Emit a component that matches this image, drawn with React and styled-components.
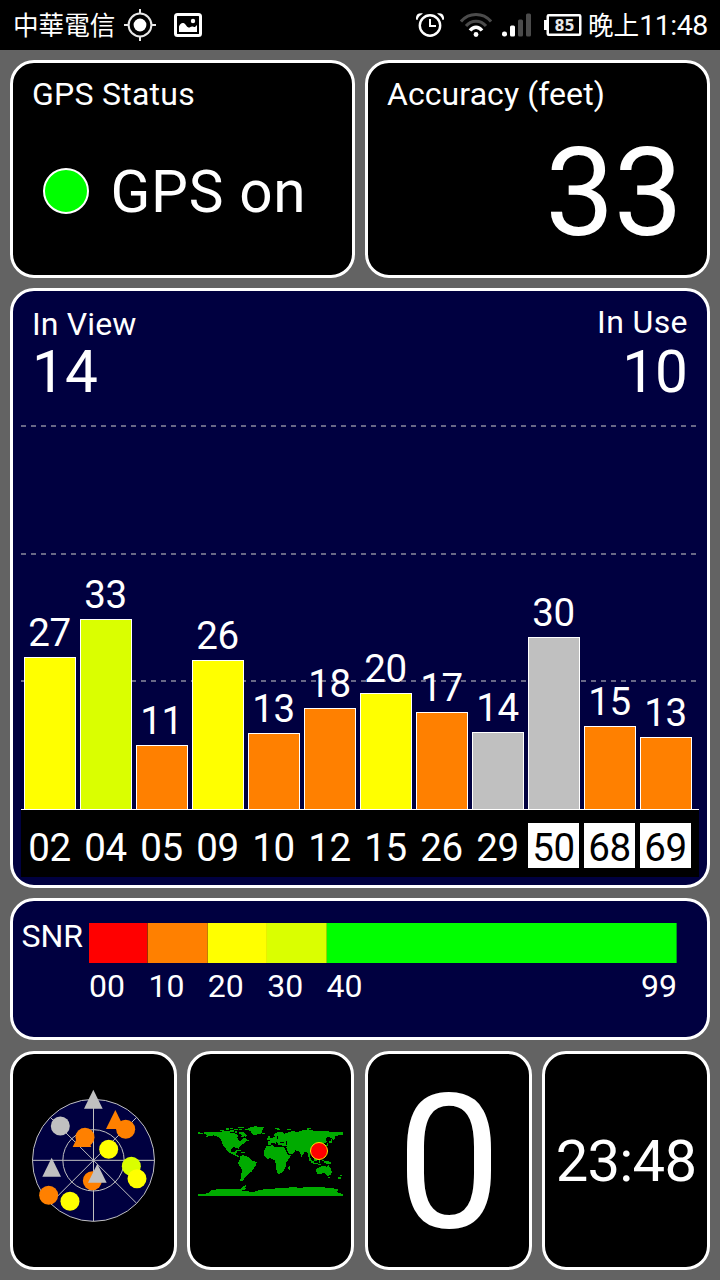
import React from "react";
import styled, { createGlobalStyle } from "styled-components";

const GlobalStyle = createGlobalStyle`
  * { box-sizing: border-box; }
  body {
    margin: 0;
    background: #636363;
    color: #fff;
    font-family: Roboto, "Noto Sans CJK TC", sans-serif;
  }
`;

const Screen = styled.div`
  width: 720px;
  height: 1280px;
  display: flex;
  flex-direction: column;
  background: #636363;
  overflow: hidden;
`;

const StatusBar = styled.header`
  height: 50px;
  flex: none;
  display: flex;
  justify-content: space-between;
  padding: 0 12px 0 13px;
  background: #000;
`;

const StatusGroup = styled.div`
  display: flex;
  align-items: center;
  height: 50px;
`;

const Carrier = styled.span`
  width: 111px;
  height: 50px;
  font-family: "Noto Sans CJK TC", sans-serif;
  font-size: 25.6px;
  line-height: 48px;
  white-space: nowrap;
`;

const Clock = styled.span`
  display: flex;
  align-items: baseline;
  width: 120px;
  margin-left: 6px;
  font-size: 28.5px;
  line-height: 50px;
  white-space: nowrap;
  letter-spacing: -0.5px;
`;

const ClockPeriod = styled.span`
  font-family: "Noto Sans CJK TC", sans-serif;
  font-size: 25.6px;
  line-height: 50px;
  letter-spacing: 0;
`;

const Icon = styled.svg`
  flex: none;
  display: block;
  margin-left: ${(p) => p.$gap || 0}px;
`;

const Dashboard = styled.main`
  display: flex;
  flex-direction: column;
  gap: 10px;
  padding: 10px;
`;

const CardRow = styled.div`
  display: flex;
  justify-content: space-between;
  margin-top: ${(p) => p.$offset || 0}px;
`;

const Card = styled.section`
  display: flex;
  flex-direction: column;
  flex: none;
  width: ${(p) => p.$width}px;
  height: ${(p) => p.$height}px;
  border: 3px solid #fff;
  border-radius: 24px;
  background: ${(p) => (p.$navy ? "#000040" : "#000")};
`;

const CardTitle = styled.h2`
  margin: 0;
  padding: 15px 0 0 19px;
  font-size: 32px;
  font-weight: 400;
  line-height: 32px;
  white-space: nowrap;
  letter-spacing: ${(p) => p.$tracking || 0}px;
`;

const FixStatus = styled.div`
  display: flex;
  align-items: center;
  gap: 21.5px;
  padding: 52px 0 0 30px;
  font-size: 58.5px;
  line-height: 60px;
  letter-spacing: 0.7px;
  white-space: nowrap;
`;

const FixDot = styled.span`
  width: 46px;
  height: 46px;
  margin-bottom: 2px;
  border: 2px solid #fff;
  border-radius: 50%;
  background: #0f0;
`;

const AccuracyValue = styled.div`
  padding: 22px 25px 0 0;
  font-size: 123px;
  line-height: 123px;
  letter-spacing: -0.8px;
  text-align: right;
`;

const Summary = styled.div`
  display: flex;
  justify-content: space-between;
  padding: 15px 19px 0;
`;

const Tally = styled.div`
  display: flex;
  flex-direction: column;
  text-align: ${(p) => (p.$end ? "right" : "left")};
`;

const TallyLabel = styled.span`
  padding-top: ${(p) => p.$drop || 0}px;
  height: 35px;
  font-size: 32px;
  line-height: 32px;
  letter-spacing: ${(p) => p.$tracking || 0}px;
`;

const TallyValue = styled.span`
  font-size: 58.5px;
  line-height: 62px;
  height: 60px;
`;

const Plot = styled.div`
  position: relative;
  display: flex;
  align-items: flex-end;
  gap: 4px;
  width: 678px;
  height: 408px;
  margin: 1px 0 0 8px;
  padding: 0 7px 0 3px;
  border-bottom: 1px solid #fff;
`;

const GridLine = styled.div`
  position: absolute;
  left: 0;
  top: ${(p) => p.$top}px;
  width: 675px;
  height: 2px;
  background: repeating-linear-gradient(90deg, #686886 0 5px, transparent 5px 10px);
`;

const Column = styled.div`
  position: relative;
  width: 52px;
  display: flex;
  flex-direction: column;
  align-items: center;
`;

const BarValue = styled.span`
  margin-bottom: 5px;
  font-size: 38.5px;
  line-height: 38.5px;
  margin-left: -1px;
  letter-spacing: -0.4px;
`;

const Bar = styled.div`
  width: 52px;
  border: 1px solid #fff;
  border-bottom: 0;
  background: ${(p) => p.$color};
`;

const SatelliteIds = styled.div`
  display: flex;
  align-items: flex-start;
  gap: 5px;
  width: 678px;
  height: 67px;
  margin-left: 8px;
  padding: 13px 0 0 3px;
  background: #000;
`;

const SatelliteId = styled.span`
  width: 51px;
  height: 45px;
  font-size: 38.5px;
  line-height: 50px;
  letter-spacing: -0.4px;
  text-align: center;
  color: ${(p) => (p.$inverse ? "#000" : "#fff")};
  background: ${(p) => (p.$inverse ? "#fff" : "transparent")};
`;

const Legend = styled.div`
  display: flex;
  padding: 19px 0 0 8px;
`;

const LegendTitle = styled.span`
  width: 68px;
  padding-left: 0.5px;
  font-size: 32px;
  line-height: 32px;
`;

const Scale = styled.div`
  width: 588px;
`;

const ScaleBar = styled.div`
  display: flex;
  height: 40px;
  margin-top: 3px;
`;

const ScaleSegment = styled.div`
  flex: ${(p) => (p.$last ? "1" : "none")};
  width: 59.4px;
  background: ${(p) => p.$color};
  border-right: 1px solid ${(p) => p.$edge};
`;

const ScaleLabels = styled.div`
  display: flex;
  padding-top: 7px;
  font-size: 32px;
  line-height: 32px;
`;

const ScaleLabel = styled.span`
  width: 59.4px;
  flex: ${(p) => (p.$last ? "1" : "none")};
  text-align: ${(p) => (p.$last ? "right" : "left")};
`;

const TileBody = styled.div`
  flex: 1;
  display: flex;
  justify-content: center;
  padding-top: ${(p) => p.$top}px;
`;

const SpeedValue = styled.div`
  padding-left: 2px;
  font-size: 187px;
  line-height: 188px;
`;

const TimeValue = styled.div`
  font-size: 58px;
  line-height: 58px;
  letter-spacing: -0.8px;
`;

const YELLOW = "#ff0";
const LIME = "#daff00";
const ORANGE = "#ff8000";
const GREY = "#c0c0c0";
const MAP_GREEN = "#00ab00";

const satellites = [
  { id: "02", snr: 27, height: 152, color: YELLOW },
  { id: "04", snr: 33, height: 190, color: LIME },
  { id: "05", snr: 11, height: 64, color: ORANGE },
  { id: "09", snr: 26, height: 149, color: YELLOW },
  { id: "10", snr: 13, height: 76, color: ORANGE },
  { id: "12", snr: 18, height: 101, color: ORANGE },
  { id: "15", snr: 20, height: 116, color: YELLOW },
  { id: "26", snr: 17, height: 97, color: ORANGE },
  { id: "29", snr: 14, height: 77, color: GREY },
  { id: "50", snr: 30, height: 172, color: GREY, inverse: true },
  { id: "68", snr: 15, height: 83, color: ORANGE, inverse: true },
  { id: "69", snr: 13, height: 72, color: ORANGE, inverse: true },
];

const scale = [
  { label: "00", color: "#f00", edge: "#a03000" },
  { label: "10", color: ORANGE, edge: "#c08000" },
  { label: "20", color: YELLOW, edge: "#e8f000" },
  { label: "30", color: LIME, edge: "#90d800" },
  { label: "40", color: "#0f0", edge: "#00a018" },
];

function LocateIcon() {
  return (
    <Icon width="32" height="32" viewBox="0 0 32 32">
      <g fill="none" stroke="#e8e8e8" strokeWidth="2">
        <circle cx="16" cy="16" r="11.4" />
        <path d="M16 0v5M16 27v5M0 16h5M27 16h5" />
      </g>
      <circle cx="16" cy="16" r="6.4" fill="#fff" />
    </Icon>
  );
}

function PictureIcon() {
  return (
    <Icon width="28" height="24" viewBox="0 0 28 24" $gap={18}>
      <rect x="1.5" y="1.5" width="25" height="21" rx="2" fill="none" stroke="#fff" strokeWidth="3" />
      <path d="M5 19v-5.500C6 11 7.500 9.500 9.500 10c2 .5 3 4 5 4.500 1.500.3 2-1 3.500-1s2 .8 3 .5l2-2V19z" fill="#fff" />
      <circle cx="19" cy="8" r="2.200" fill="#fff" />
    </Icon>
  );
}

function AlarmIcon() {
  return (
    <Icon width="28" height="24" viewBox="0 0 28 24">
      <circle cx="14" cy="12.500" r="10.200" fill="none" stroke="#fff" strokeWidth="2.400" />
      <path d="M14 6v7h6" fill="none" stroke="#fff" strokeWidth="2" />
      <path d="M0 6.500C-.5 2 2-.5 7 .5L5 2C3 3 2 5 1.500 7zM28 6.500C28.500 2 26-.5 21 .5l2 1.500c2 1 3 3 3.500 5z" fill="#fff" />
    </Icon>
  );
}

function WifiIcon() {
  return (
    <Icon width="32" height="24" viewBox="0 0 32 24" $gap={16}>
      <g fill="none" strokeWidth="3">
        <path d="M1 8.500C9-.8 23-.8 31 8.500" stroke="#4b4b4b" />
        <path d="M6 13C11.500 6.500 20.500 6.500 26 13" stroke="#4b4b4b" />
        <path d="M10 17.500c3.500-4.300 8.500-4.300 12 0" stroke="#fff" strokeWidth="3.500" />
      </g>
      <circle cx="16" cy="21.500" r="2.400" fill="#fff" />
    </Icon>
  );
}

function SignalIcon() {
  return (
    <Icon width="30" height="24" viewBox="0 0 30 24" $gap={10}>
      <rect x="0" y="18.500" width="5" height="5" rx="2.200" fill="#fff" />
      <rect x="8" y="12.500" width="5" height="11" rx="1.500" fill="#fff" />
      <rect x="16" y="6.500" width="5" height="17" rx="1.500" fill="#4b4b4b" />
      <rect x="24" y="0.500" width="5" height="23" rx="1.500" fill="#4b4b4b" />
    </Icon>
  );
}

function BatteryIcon() {
  return (
    <Icon width="38" height="22" viewBox="0 0 38 22" $gap={12}>
      <rect x="0" y="6" width="3" height="10" fill="#fff" />
      <rect x="3.750" y="1.250" width="32.500" height="19.500" rx="1" fill="none" stroke="#fff" strokeWidth="2.500" />
      <text
        x="20.500"
        y="16.500"
        fill="#e8e8e8"
        fontFamily="'DejaVu Sans', sans-serif"
        fontSize="15"
        fontWeight="700"
        textAnchor="middle"
        textLength="20"
        lengthAdjust="spacingAndGlyphs"
      >
        85
      </text>
    </Icon>
  );
}

const skyMarks = [
  { shape: "circle", x: 181, y: 258, color: GREY },
  { shape: "triangle", x: 280, y: 178, color: GREY },
  { shape: "triangle", x: 346, y: 239, color: ORANGE },
  { shape: "circle", x: 377, y: 268, color: ORANGE },
  { shape: "triangle", x: 246, y: 293, color: ORANGE },
  { shape: "circle", x: 255, y: 292, color: ORANGE },
  { shape: "circle", x: 326, y: 328, color: YELLOW },
  { shape: "circle", x: 394, y: 379, color: LIME },
  { shape: "circle", x: 411, y: 416, color: YELLOW },
  { shape: "triangle", x: 155, y: 382, color: GREY },
  { shape: "circle", x: 277, y: 422, color: ORANGE },
  { shape: "triangle", x: 292, y: 400, color: GREY },
  { shape: "circle", x: 146, y: 466, color: ORANGE },
  { shape: "circle", x: 210, y: 484, color: YELLOW },
];

function SkyView() {
  return (
    <svg width="123" height="133" viewBox="96 147 369 399">
      <circle cx="280.500" cy="361" r="183" fill="#000040" stroke="#c0c0c0" strokeWidth="3" />
      <g fill="none" stroke="#c0c0c0" strokeWidth="3">
        <circle cx="280.500" cy="361" r="92" />
        <path d="M97 361H464M280.500 178V544M151 232L410 490M410 232L151 490" />
      </g>
      {skyMarks.map((m, i) =>
        m.shape === "circle" ? (
          <circle key={i} cx={m.x} cy={m.y} r="28.500" fill={m.color} />
        ) : (
          <path key={i} d={`M${m.x} ${m.y - 29}l28 57h-56z`} fill={m.color} />
        )
      )}
    </svg>
  );
}

function WorldMap() {
  return (
    <svg width="145" height="70" viewBox="39 48 435 210">
      <g fill={MAP_GREEN} shapeRendering="crispEdges">
        <path d="M39 65h6v4h9v3H39zM57 66L75 65 100 66 112 66 130 68 150 70 160 76 157 83 160 90 166 94 172 87 180 82 188 90 190 93 182 95 178 99 170 104 163 110 160 117 156 113 145 112 137 118 140 126 148 127 152 122 156 126 152 132 160 137 164 140 160 141 150 136 140 131 131 128 124 118 113 104 109 92 105 84 95 78 85 76 75 79 62 80 66 75 57 72z" />
        <path d="M106 60h12v3h-12zM112 64h22v4h-22zM122 55h9v4h-9zM136 60h10v6h-10zM134 53h10v4h-10zM150 64h7v6h-7zM148 56h12v4h-12zM158 51h20v4h-20zM162 56h9v5h-9zM163 65L174 66 187 76 181 81 178 77 175 83 166 80 172 75 163 71zM185 90h7v4h-7z" />
        <path d="M179 58L190 55 198 51 210 49 237 52 231 62 231 70 218 73 206 77 200 70 195 62z" />
        <path d="M152 121h16v3h-16zM169 126h10v3h-10zM166 137L175 136 190 141 198 150 215 157 213 166 206 175 200 185 190 192 182 200 176 207 175 215 166 212 168 198 171 180 165 170 159 158 164 148 164 140z" />
        <path d="M245 108L262 106 272 112 283 111 297 112 302 122 309 134 319 134 313 145 304 157 304 168 297 180 290 190 278 191 273 176 272 160 268 150 258 145 245 146 237 135 238 122zM310 170L317 167 314 180 310 178z" />
        <path d="M248 102L248 94 255 93 254 89 262 83 270 80 266 72 280 66 292 65 298 72 306 68 320 64 340 65 355 60 370 58 385 62 400 62 420 64 445 65 474 66 474 74 460 76 450 80 445 90 440 84 430 80 422 84 425 95 415 103 420 112 415 130 395 135 385 130 376 126 374 137 379 148 370 140 366 124 357 128 350 141 345 128 338 122 330 121 328 128 318 133 311 130 304 114 306 108 295 107 285 106 278 105 280 98 272 97 275 105 268 100 260 98 256 105 248 106z" />
        <path d="M249 79h5v5h3v7h-8zM245 84h3v5h-3zM230 70h10v3h-10zM271 54h12v3h-12zM277 57h8v3h-8zM307 58h12v3h-12zM367 54h12v4h-12zM420 106h9v3h-9zM426 99h4v7h-4zM431 94h9v4h-9zM437 88h5v6h-5zM443 83h7v3h-7z" />
        <path d="M373 143h4v6h4v5h5v4h-7v-5h-6zM387 146l8-7h5l-3 13h-9zM384 158h14v3h-14zM402 150h4v8h-4zM399 161h10v3h-10zM411 151h7v3h-7zM416 153h12l10 5v4h-14l-8-5z" />
        <path d="M394 177L404 172 412 168 418 167 424 170 430 165 436 174 441 185 436 195 428 198 418 190 405 191 395 192zM429 201h6v3h-6zM466 195h6v4h-6zM459 202h8v5h-8z" />
        <path d="M39 252L70 250 78 240 100 238 130 238 165 238 172 232 180 226 186 228 180 233 184 237 170 242 205 246 225 240 250 236 290 235 325 231 345 234 360 231 400 231 440 234 460 238 455 246 474 252 474 258 39 258z" />
        <path d="M284 95h12v4h-12zM303 94h4v12h-4zM276 78h4v8h-4z" fill="#000" />
      </g>
      <circle cx="402" cy="123" r="25.500" fill="#f00" stroke="#ffe800" strokeWidth="3" />
    </svg>
  );
}

export default function App() {
  return (
    <Screen>
      <GlobalStyle />
      <StatusBar>
        <StatusGroup>
          <Carrier>中華電信</Carrier>
          <LocateIcon />
          <PictureIcon />
        </StatusGroup>
        <StatusGroup>
          <AlarmIcon />
          <WifiIcon />
          <SignalIcon />
          <BatteryIcon />
          <Clock>
            <ClockPeriod>晚上</ClockPeriod>11:48
          </Clock>
        </StatusGroup>
      </StatusBar>
      <Dashboard>
        <CardRow>
          <Card $width={345} $height={218}>
            <CardTitle $tracking={0.25}>GPS Status</CardTitle>
            <FixStatus>
              <FixDot />
              GPS on
            </FixStatus>
          </Card>
          <Card $width={345} $height={218}>
            <CardTitle $tracking={0.08}>Accuracy (feet)</CardTitle>
            <AccuracyValue>33</AccuracyValue>
          </Card>
        </CardRow>
        <Card $width={700} $height={600} $navy>
          <Summary>
            <Tally>
              <TallyLabel $drop={2} $tracking={0.15}>In View</TallyLabel>
              <TallyValue>14</TallyValue>
            </Tally>
            <Tally $end>
              <TallyLabel $tracking={0.4}>In Use</TallyLabel>
              <TallyValue>10</TallyValue>
            </Tally>
          </Summary>
          <Plot>
            <GridLine $top={23} />
            <GridLine $top={151} />
            <GridLine $top={278} />
            {satellites.map((s) => (
              <Column key={s.id}>
                <BarValue>{s.snr}</BarValue>
                <Bar $color={s.color} style={{ height: s.height }} />
              </Column>
            ))}
          </Plot>
          <SatelliteIds>
            {satellites.map((s) => (
              <SatelliteId key={s.id} $inverse={s.inverse}>
                {s.id}
              </SatelliteId>
            ))}
          </SatelliteIds>
        </Card>
        <Card $width={700} $height={142} $navy>
          <Legend>
            <LegendTitle>SNR</LegendTitle>
            <Scale>
              <ScaleBar>
                {scale.map((s, i) => (
                  <ScaleSegment key={s.label} $color={s.color} $edge={s.edge} $last={i === 4} />
                ))}
              </ScaleBar>
              <ScaleLabels>
                {scale.map((s) => (
                  <ScaleLabel key={s.label}>{s.label}</ScaleLabel>
                ))}
                <ScaleLabel $last>99</ScaleLabel>
              </ScaleLabels>
            </Scale>
          </Legend>
        </Card>
        <CardRow $offset={1}>
          <Card $width={167} $height={219}>
            <TileBody $top={35}>
              <SkyView />
            </TileBody>
          </Card>
          <Card $width={167} $height={219}>
            <TileBody $top={72}>
              <WorldMap />
            </TileBody>
          </Card>
          <Card $width={167} $height={219}>
            <TileBody $top={16}>
              <SpeedValue>0</SpeedValue>
            </TileBody>
          </Card>
          <Card $width={168} $height={219}>
            <TileBody $top={78}>
              <TimeValue>23:48</TimeValue>
            </TileBody>
          </Card>
        </CardRow>
      </Dashboard>
    </Screen>
  );
}
